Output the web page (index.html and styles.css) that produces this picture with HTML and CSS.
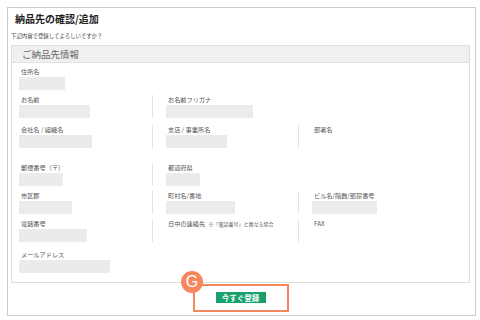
FILE: index.html
```html
<!DOCTYPE html>
<html>
<head>
    <title>納品先の確認/追加</title>
    <link rel="stylesheet" href="styles.css">
</head>
<body>
    <div class="page">
        <h1>納品先の確認/追加</h1>
        <p class="lead">下記内容で登録してよろしいですか？</p>

        <div class="panel">
            <div class="panel-head">ご納品先情報</div>
            <div class="panel-body">
                <div class="row r1">
                    <div class="cell">
                        <div class="label">住所名</div>
                        <div class="field w46"></div>
                    </div>
                </div>
                <div class="row r2">
                    <div class="cell">
                        <div class="label">お名前</div>
                        <div class="field w71"></div>
                    </div>
                    <div class="cell sep">
                        <div class="label">お名前フリガナ</div>
                        <div class="field w87"></div>
                    </div>
                </div>
                <div class="row r3">
                    <div class="cell">
                        <div class="label">会社名 / 組織名</div>
                        <div class="field w73"></div>
                    </div>
                    <div class="cell sep">
                        <div class="label">支店 / 事業所名</div>
                        <div class="field w61"></div>
                    </div>
                    <div class="cell sep">
                        <div class="label">部署名</div>
                    </div>
                </div>
                <div class="row r4">
                    <div class="cell">
                        <div class="label">郵便番号（〒）</div>
                        <div class="field w44"></div>
                    </div>
                    <div class="cell sep">
                        <div class="label">都道府県</div>
                        <div class="field w34"></div>
                    </div>
                </div>
                <div class="row r5">
                    <div class="cell">
                        <div class="label">市区郡</div>
                        <div class="field w53"></div>
                    </div>
                    <div class="cell sep">
                        <div class="label">町村名/番地</div>
                        <div class="field w69"></div>
                    </div>
                    <div class="cell sep">
                        <div class="label">ビル名/階数/部屋番号</div>
                        <div class="field w65"></div>
                    </div>
                </div>
                <div class="row r6">
                    <div class="cell">
                        <div class="label">電話番号</div>
                        <div class="field w68"></div>
                    </div>
                    <div class="cell sep">
                        <div class="label">日中の連絡先 <span class="note">※「電話番号」と異なる場合</span></div>
                    </div>
                    <div class="cell sep">
                        <div class="label">FAX</div>
                    </div>
                </div>
                <div class="row r7">
                    <div class="cell">
                        <div class="label">メールアドレス</div>
                        <div class="field w91"></div>
                    </div>
                </div>
            </div>
        </div>

        <div class="actions">
            <button class="submit">今すぐ登録</button>
        </div>

        <!-- annotation overlay -->
        <div class="mark-box"></div>
        <div class="mark-badge">G</div>
    </div>
</body>
</html>
```

FILE: styles.css
```css
body {
    margin: 0;
    padding: 0;
    background: #fff;
    font-family: "Noto Sans CJK JP", "Noto Sans", sans-serif;
    color: #555;
}

.page {
    position: relative;
    box-sizing: border-box;
    width: 469px;
    height: 309px;
    margin: 7px;
    border: 1px solid #cccccc;
    padding: 0 5px 0 3px;
}

h1 {
    margin: 0;
    padding: 4px 0 0 4px;
    font-size: 10px;
    line-height: 14px;
    font-weight: bold;
    color: #222;
}

.lead {
    margin: 6px 0 0 0;
    font-size: 5.4px;
    line-height: 8px;
    color: #444;
}

.panel {
    margin-top: 5px;
    border: 1px solid #dedede;
}

.panel-head {
    height: 16px;
    line-height: 16px;
    padding-left: 10px;
    background: #f0f0f0;
    border-bottom: 1px solid #e2e2e2;
    font-size: 9.5px;
    color: #666;
}

.panel-body {
    padding: 4px 0 9px 7px;
}

.row {
    display: grid;
    grid-template-columns: 133px 146px 1fr;
}

.r2 { margin-top: 5px; }
.r3 { margin-top: 7px; }
.r4 { margin-top: 15px; }
.r5 { margin-top: 5px; }
.r6 { margin-top: 5px; }
.r7 { margin-top: 8px; }

.cell {
    min-height: 23px;
}

.cell.sep {
    border-left: 1px solid #e4e4e4;
    padding-left: 13px;
}

.label {
    height: 9px;
    line-height: 9px;
    margin-bottom: 1px;
    padding-left: 2px;
    font-size: 6.2px;
    color: #555;
    white-space: nowrap;
}

.note {
    font-size: 5px;
    margin-left: 2px;
}

.field {
    height: 13px;
    background: #ebebeb;
}

.w34 { width: 34px; }
.w44 { width: 44px; }
.w46 { width: 46px; }
.w53 { width: 53px; }
.w61 { width: 61px; }
.w65 { width: 65px; }
.w68 { width: 68px; }
.w69 { width: 69px; }
.w71 { width: 71px; }
.w73 { width: 73px; }
.w87 { width: 87px; }
.w91 { width: 91px; }

.actions {
    margin-top: 9px;
    text-align: center;
}

.submit {
    width: 50px;
    height: 11px;
    padding: 0;
    border: none;
    background: #17a06c;
    color: #fff;
    font-family: "Noto Sans CJK JP", sans-serif;
    font-size: 7.5px;
    font-weight: bold;
    line-height: 11px;
    vertical-align: top;
}

.mark-box {
    position: absolute;
    left: 185px;
    top: 276px;
    width: 92px;
    height: 24px;
    border: 2px solid #f5875f;
}

.mark-badge {
    position: absolute;
    left: 173px;
    top: 263px;
    width: 22px;
    height: 22px;
    border-radius: 50%;
    background: #f5875f;
    color: #fff;
    font-family: "Liberation Sans", Arial, sans-serif;
    font-size: 16px;
    line-height: 22px;
    text-align: center;
}
```
